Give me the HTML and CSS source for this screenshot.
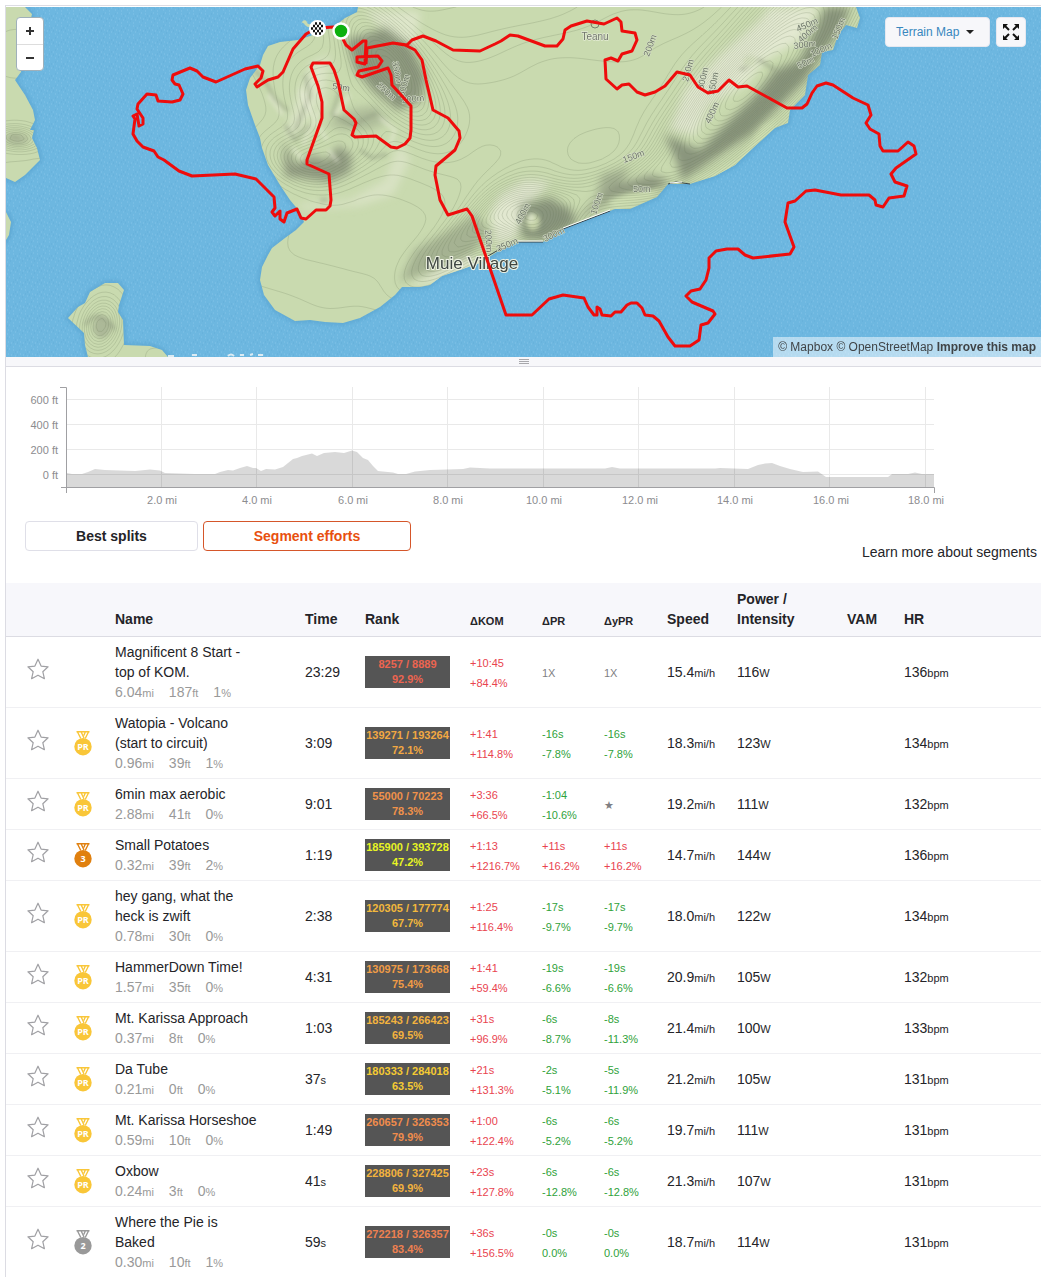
FILE: index.html
```html
<!DOCTYPE html>
<html lang="en">
<head>
<meta charset="utf-8">
<meta name="viewport" content="width=device-width, initial-scale=1">
<title>Segment efforts</title>
<link rel="stylesheet" href="styles.css">
</head>
<body>
<svg class="defs" aria-hidden="true">
  <symbol id="star" viewBox="0 0 22 22"><path d="M11 1.2l3.1 6.9 7 .7-5.3 4.9 1.6 7L11 17.2l-6.4 3.5 1.6-7L.9 8.8l7-.7z" fill="none" stroke="#a0a0a4" stroke-width="1.2" stroke-linejoin="round"/></symbol>
  <symbol id="medal" viewBox="0 0 18 26"><path d="M2.500 1.700h13M3.300 1.500l3.500 7M14.700 1.500l-3.500 7M7 1.500l3 6.500M11.500 1.500l-1.700 4" fill="none" stroke="currentColor" stroke-width="1.400"/><circle cx="9" cy="16.700" r="8.700" fill="currentColor"/></symbol>
</svg>
<main class="page">
  <section class="map" aria-label="Route map">
    <svg class="map-art" viewBox="6 7 1035 350" preserveAspectRatio="xMidYMid slice">
      <defs>
        <pattern id="waves" width="12" height="12" patternUnits="userSpaceOnUse">
          <rect width="12" height="12" fill="#6db7e0"/>
          <path d="M1 2h1M5 4h1M9 1h1M3 8h1M7 10h1M11 7h1M8 6h1M1 11h1" stroke="#83c4e8"/>
          <path d="M3 4h1M7 2h1M5 7h1M10 9h1M1 6h1" stroke="#63add9"/>
        </pattern>
        <path id="land" d="M358 7L357 12 345 18 335 26 325 30 310 36 298 40 280 42 268 46 263 55 260 65 250 78 246 90 248 105 255 125 260 138 262 148 268 165 280 185 290 200 300 212 304 222 296 230 285 238 272 248 268 255 262 267 260 280 264 295 275 310 295 321 310 320 325 322 343 323 360 318 380 307 395 295 402 287 420 287 430 285 442 276 460 270 480 263 500 250 518 242 543 242 565 228 615 209 630 209 657 197 668 184 690 184 715 176 735 165 755 146 775 128 788 123 790 110 805 95 808 75 820 65 822 52 833 50 838 35 846 25 857 28 860 18 856 7z
          M6 7H25L32 14 26 40 21 72 15 80 25 95 33 110 35 120 30 130 34 130 32 138 37 148 40 160 25 175 15 182 6 178z
          M6 212L11 222 9 235 6 240z
          M68 318L78 307 85 303 90 292 105 283 118 283 124 290 119 305 118 312 123 320 124 345 150 346 162 350 168 357H88L85 345 84 333z"/>
        <clipPath id="land-clip"><use href="#land"/></clipPath>
        <filter id="soft4" x="-30%" y="-30%" width="160%" height="160%"><feGaussianBlur stdDeviation="4"/></filter>
        <filter id="soft2" x="-30%" y="-30%" width="160%" height="160%"><feGaussianBlur stdDeviation="2"/></filter>
      </defs>
      <rect x="6" y="7" width="1035" height="350" fill="url(#waves)"/>
      <use href="#land" fill="none" stroke="#5ba6d2" stroke-width="4" filter="url(#soft2)"/>
      <use href="#land" fill="#c9daaf"/>
      <g clip-path="url(#land-clip)">
        <g filter="url(#soft4)" fill="#e2e8d0">
          <path d="M312 62L330 55 325 95 300 130 285 140 297 95z" opacity=".7"/>
          <path d="M365 10L420 12 415 50 390 40z" opacity=".8"/>
          <path d="M400 140L410 160 393 195 360 206 300 210 300 204 350 200 385 180z" opacity=".6"/>
          <path d="M500 195L525 180 550 182 530 205 515 240 495 245 490 215z"/>
          <path d="M670 130L685 90 720 55 760 20 770 7H820L800 40 765 60 745 85 710 105 695 135z"/>
          <path d="M405 288L440 268 470 255 480 262 440 280z"/>
        </g>
        <g filter="url(#soft4)" fill="#87917a">
          <path d="M347 40L385 28 410 45 425 75 422 100 398 110 375 92 355 70z" opacity=".9"/>
          <path d="M284 140L295 165 312 155 328 160 338 145 352 155 350 172 330 182 305 178 285 176z" opacity=".85"/>
          <path d="M325 125L350 110 375 105 390 120 370 130 345 130z" opacity=".4"/>
          <path d="M520 205L550 198 572 210 575 225 545 240 522 238z" opacity=".95"/>
          <path d="M400 282L415 250 450 230 475 215 490 230 470 255 430 272z" opacity=".55"/>
          <path d="M600 200L615 185 650 175 670 180 655 192 620 196z" opacity=".9"/>
          <path d="M595 200L602 175 630 168 610 202 570 225z" opacity=".6"/>
          <path d="M665 135L700 150 725 125 755 95 775 70 800 60 815 30 825 7H850L842 28 825 50 805 80 785 100 750 135 725 150 700 168 682 180 676 160z" opacity=".95"/>
        </g>
        <g filter="url(#soft2)">
          <g fill="none" stroke="#8d967e" stroke-width="3" opacity=".6">
            <path d="M255 70l12 14 8 15 13 12M305 75l5 20-15 35M340 90l-8 25 20 10 25-12M285 125l10 15 15-15M360 150l12 8 15-4M263 185l15 12M320 200h8M10 135l10 4"/>
            <path d="M740 70l20-10 15 10M700 155l20-5 15-15M760 110l20-15M85 325q15-20 30 5"/>
          </g>
          <g fill="none" stroke="#eef0df" stroke-width="3" opacity=".6">
            <path d="M300 90l15 30-12 25M325 100l-10 20 12 20M350 95l-15 20M380 118l15 12-5 15M293 148l10 12M328 150l10 12M268 95l15 20"/>
          </g>
          <ellipse cx="533" cy="222" rx="7" ry="9" fill="#c6d3a9"/>
          <ellipse cx="531" cy="218" rx="3" ry="5" fill="#dde5c9"/>
          <ellipse cx="750" cy="61" rx="7" ry="6" fill="#d6e0c0"/>
          <path d="M608 202l20-8 35-6-12 10-35 10zM688 180l25-8 25-12 25-34 15-8-18 30-35 30z" fill="#cfdfb3"/>
          <ellipse cx="102" cy="327" rx="9" ry="11" fill="#99a388" opacity=".6"/>
          <ellipse cx="17" cy="139" rx="12" ry="6" fill="#99a388" opacity=".5"/>
        </g>
        <path class="contours"/>
      </g>
      <path d="M488 256L500 249M518 242H543M563 229L610 211M668 184L676 182 690 184" fill="none" stroke="#38444a"/>
      <path d="M518 241H543M563 228L610 210M670 183L682 182" fill="none" stroke="#fff"/>
      <path d="M303 23q2-3 3 1 3 3 6 1" fill="none" stroke="#c9daaf" stroke-width="3"/>
      <path d="M168 356h6M192 355h5M228 356q3-3 6 0M240 355h4M250 355l3-1M258 355h5" stroke="#dcebf3" stroke-width="2" fill="none"/>
      <g class="contour-label">
        <text x="332" y="89" transform="rotate(8 332 89)">50m</text>
        <text x="392" y="62" transform="rotate(78 392 62)">350m</text>
        <text x="404" y="97" transform="rotate(-75 404 97)">300m</text>
        <text x="376" y="86" transform="rotate(42 376 86)">250m</text>
        <text x="402" y="103" transform="rotate(-6 402 103)">200m</text>
        <text x="649" y="57" transform="rotate(-70 649 57)">200m</text>
        <text x="688" y="82" transform="rotate(-75 688 82)">250m</text>
        <text x="703" y="90" transform="rotate(-76 703 90)">300m</text>
        <text x="714" y="95" transform="rotate(-78 714 95)">350m</text>
        <text x="710" y="124" transform="rotate(-65 710 124)">400m</text>
        <text x="624" y="163" transform="rotate(-20 624 163)">150m</text>
        <text x="633" y="192">50m</text>
        <text x="596" y="215" transform="rotate(-72 596 215)">100m</text>
        <text x="520" y="225" transform="rotate(-62 520 225)">400m</text>
        <text x="485" y="230" transform="rotate(86 485 230)">200m</text>
        <text x="498" y="252" transform="rotate(-24 498 252)">350m</text>
        <text x="545" y="242" transform="rotate(-26 545 242)">300m</text>
        <text x="798" y="32" transform="rotate(-24 798 32)">450m</text>
        <text x="801" y="43" transform="rotate(-40 801 43)">400m</text>
        <text x="794" y="49" transform="rotate(-8 794 49)">300m</text>
        <text x="812" y="57" transform="rotate(-24 812 57)">100m</text>
        <text x="799" y="69" transform="rotate(-26 799 69)">50m</text>
        <text x="837" y="40" transform="rotate(-68 837 40)">150m</text>
      </g>
      <circle cx="595" cy="24" r="4" fill="none" stroke="#77806d"/>
      <text class="place" x="595" y="40">Teanu</text>
      <text class="place place-large" x="472" y="269">Muie Village</text>
      <path class="route" d="M341 31L334 27 317 28 306 34 293 49 283 72 278 77 268 80 257 87 255 84 261 78 263 71 258 66 245 69 216 82 203 77 197 71 190 68 173 75 172 80 175 84 179 85 183 94 180 100 172 102 158 101 156 95 147 94 138 104 137 109 143 118 143 124 139 126 137 114 133 116 135 119 133 134 137 141 143 147 154 151 158 157 164 160 179 171 192 176 235 174 256 179 274 197 275 208 272 212 275 216 280 211 280 219 284 222 287 213 297 209 301 218 306 219 316 210 326 210 330 206 331 200 329 174 307 164 307 160 322 118 322 102 318 86 311 67 313 63 330 63 334 70 338 82 344 110 354 119 356 123 352 135 355 137 376 136 391 147 397 148 405 144 410 138 411 130 411 106 392 85 391 75 388 68 362 77 357 75 359 71 378 67 382 61 378 56 357 57 357 62 365 64 366 41 363 41 357 46 352 50 346 45 340 33"/>
      <path class="route" d="M366 64L367 48 393 43 405 45 415 50 422 60 426 80 433 110 448 118 459 131 460 138 455 150 436 166 435 175 440 200 448 215 467 209 472 216 506 315 532 315 549 299 563 295 584 298 588 307 594 315 597 315 597 307 600 309 602 315 611 316 615 312 621 312 627 305 631 303 637 303 642 308 645 315 653 316 659 321 668 337 675 346 690 346 699 340 701 325 708 323 715 314 713 311 692 302 686 296 691 291 700 289 706 280 709 268 709 258 716 251 727 249 738 249 745 255 753 258 790 254 794 247 785 222 788 203 795 201 806 191 815 190 841 195 869 195 875 200 876 205 883 207 889 198 904 196 907 186 895 182 891 174 896 168 916 154 914 146 908 142 898 151 883 151 880 146 879 134 870 129 866 123 871 115 868 105 853 98 833 85 826 83 817 86 812 93 807 104 802 108 787 108 747 86 738 87 729 80 718 91 708 93 698 87 690 75 677 72 665 86 655 92 645 95 637 92 629 84 622 85 617 89 606 79 605 60 611 58 618 61 622 54 632 51 637 40 635 33 622 31 621 22 617 18 604 24 587 21 571 26 565 30 563 39 557 46 545 46 518 36 510 35 501 41 495 44 480 51 453 50 436 41 423 36 412 40 407 45 393 43 367 48"/>
      <circle cx="341" cy="31" r="7.500" fill="#0bb00d" stroke="#fff" stroke-width="2.500"/>
      <circle cx="317.500" cy="28.500" r="8.500" fill="#fff"/>
      <path d="M315 24h2M319 24h2M313 26.500h2M317 26.500h2M321 26.500h2M315 29h2M319 29h2M313 31.500h2M317 31.500h2M321 31.500h2M315 34h2M319 34h2M311 29h2" transform="translate(0 -.5)" stroke="#111" stroke-width="2.300"/>
    </svg>
    <div class="zoom-control">
      <button type="button" aria-label="Zoom in"><svg width="8" height="8"><path d="M4 0v8M0 4h8" stroke="#333" stroke-width="2"/></svg></button>
      <button type="button" aria-label="Zoom out"><svg width="8" height="8"><path d="M0 4h8" stroke="#333" stroke-width="2"/></svg></button>
    </div>
    <div class="map-tools">
      <button type="button" class="map-type">Terrain Map <svg width="8" height="4"><path d="M0 0h8L4 4z" fill="#222"/></svg></button>
      <button type="button" class="fullscreen" aria-label="Full screen"><svg width="16" height="16"><path d="M2 2l4 4M14 2l-4 4M2 14l4-4M14 14l-4-4" stroke="#111" stroke-width="2"/><path d="M0 0h5L0 5zM16 0h-5l5 5zM0 16h5l-5-5zM16 16h-5l5-5z" fill="#111"/></svg></button>
    </div>
    <div class="attribution"><a href="#">© Mapbox</a> <a href="#">© OpenStreetMap</a> <a href="#"><b>Improve this map</b></a></div>
  </section>
  <div class="resizer"><svg width="10" height="5"><path d="M0 .5h10M0 2.500h10M0 4.500h10" stroke="#a8a8ac"/></svg></div>

  <svg class="elevation" viewBox="6 367 1035 154" preserveAspectRatio="xMinYMin meet" role="img" aria-label="Elevation profile">
    <path d="M67 399.500H934M67 424.500H934M67 449.500H934M67 474.500H934M161.500 387V487M256.500 387V487M352.500 387V487M447.500 387V487M543.500 387V487M638.500 387V487M734.500 387V487M829.500 387V487M925.500 387V487" stroke="#e9e9e9" fill="none"/>
    <path d="M67 487V473L72 474 82 474 88 472 95 469 105 470 135 471 150 469.500 160 470.500 165 473 195 474 215 474 220 472 228 470 233 470.500 240 468 247 466 253 468 256 468 261 471 266 469 275 469.500 283 467 288 463 293 459 297 458 302 456 312 453.500 317 456 324 453 335 452 344 453 352 450.500 357 452 363 458 368 460 373 466 378 471 393 472.500 398 474 406 474 415 471.500 430 470 463 469 470 467.500 490 468.500 605 468.500 612 467 620 468.500 715 468.500 720 468 748 469 758 465 765 463.500 772 463 780 466 790 469 803 472 818 471.500 826 477 888 477 892 474 908 474 915 472.500 922 474 934 474V487z" fill="#000" opacity=".15"/>
    <path d="M60 387.500H66.500V493M61 487.500H934.500V493" stroke="#a0a0a3" fill="none"/>
    <g class="axis axis-y"><text x="58" y="404">600 ft</text><text x="58" y="429">400 ft</text><text x="58" y="454">200 ft</text><text x="58" y="479">0 ft</text></g>
    <g class="axis"><text x="162" y="504">2.0 mi</text><text x="257" y="504">4.0 mi</text><text x="353" y="504">6.0 mi</text><text x="448" y="504">8.0 mi</text><text x="544" y="504">10.0 mi</text><text x="640" y="504">12.0 mi</text><text x="735" y="504">14.0 mi</text><text x="831" y="504">16.0 mi</text><text x="926" y="504">18.0 mi</text></g>
  </svg>

  <div class="toolbar">
    <div class="tabs"><button type="button">Best splits</button><button type="button" class="active">Segment efforts</button></div>
    <a class="learn" href="#">Learn more about segments</a>
  </div>

  <table class="efforts">
    <colgroup><col class="c-star"><col class="c-medal"><col class="c-name"><col class="c-time"><col class="c-rank"><col class="c-kom"><col class="c-pr"><col class="c-ypr"><col class="c-speed"><col class="c-power"><col class="c-vam"><col></colgroup>
    <thead><tr><th></th><th></th><th>Name</th><th>Time</th><th>Rank</th><th><small>ΔKOM</small></th><th><small>ΔPR</small></th><th><small>ΔyPR</small></th><th>Speed</th><th>Power / Intensity</th><th>VAM</th><th>HR</th></tr></thead>
    <tbody>
      <tr><td><button type="button" class="star" aria-label="Star segment"><svg><use href="#star"/></svg></button></td><td></td><td>Magnificent 8 Start - top of KOM.<div class="stats"><span>6.04<small>mi</small></span><span>187<small>ft</small></span><span>1<small>%</small></span></div></td><td>23:29</td><td><div class="rank r93">8257 / 8889<br>92.9%</div></td><td class="up"><small>+10:45<br>+84.4%</small></td><td class="none"><small>1X</small></td><td class="none"><small>1X</small></td><td>15.4<small>mi/h</small></td><td>116<small>W</small></td><td></td><td>136<small>bpm</small></td></tr>
      <tr><td><button type="button" class="star" aria-label="Star segment"><svg><use href="#star"/></svg></button></td><td><svg class="medal gold"><use href="#medal"/><text x="9" y="20">PR</text></svg></td><td>Watopia - Volcano (start to circuit)<div class="stats"><span>0.96<small>mi</small></span><span>39<small>ft</small></span><span>1<small>%</small></span></div></td><td>3:09</td><td><div class="rank r72">139271 / 193264<br>72.1%</div></td><td class="up"><small>+1:41<br>+114.8%</small></td><td class="down"><small>-16s<br>-7.8%</small></td><td class="down"><small>-16s<br>-7.8%</small></td><td>18.3<small>mi/h</small></td><td>123<small>W</small></td><td></td><td>134<small>bpm</small></td></tr>
      <tr><td><button type="button" class="star" aria-label="Star segment"><svg><use href="#star"/></svg></button></td><td><svg class="medal gold"><use href="#medal"/><text x="9" y="20">PR</text></svg></td><td>6min max aerobic<div class="stats"><span>2.88<small>mi</small></span><span>41<small>ft</small></span><span>0<small>%</small></span></div></td><td>9:01</td><td><div class="rank r78">55000 / 70223<br>78.3%</div></td><td class="up"><small>+3:36<br>+66.5%</small></td><td class="down"><small>-1:04<br>-10.6%</small></td><td class="none"><small>★</small></td><td>19.2<small>mi/h</small></td><td>111<small>W</small></td><td></td><td>132<small>bpm</small></td></tr>
      <tr><td><button type="button" class="star" aria-label="Star segment"><svg><use href="#star"/></svg></button></td><td><svg class="medal bronze"><use href="#medal"/><text x="9" y="20">3</text></svg></td><td>Small Potatoes<div class="stats"><span>0.32<small>mi</small></span><span>39<small>ft</small></span><span>2<small>%</small></span></div></td><td>1:19</td><td><div class="rank r47">185900 / 393728<br>47.2%</div></td><td class="up"><small>+1:13<br>+1216.7%</small></td><td class="up"><small>+11s<br>+16.2%</small></td><td class="up"><small>+11s<br>+16.2%</small></td><td>14.7<small>mi/h</small></td><td>144<small>W</small></td><td></td><td>136<small>bpm</small></td></tr>
      <tr><td><button type="button" class="star" aria-label="Star segment"><svg><use href="#star"/></svg></button></td><td><svg class="medal gold"><use href="#medal"/><text x="9" y="20">PR</text></svg></td><td>hey gang, what the heck is zwift<div class="stats"><span>0.78<small>mi</small></span><span>30<small>ft</small></span><span>0<small>%</small></span></div></td><td>2:38</td><td><div class="rank r68">120305 / 177774<br>67.7%</div></td><td class="up"><small>+1:25<br>+116.4%</small></td><td class="down"><small>-17s<br>-9.7%</small></td><td class="down"><small>-17s<br>-9.7%</small></td><td>18.0<small>mi/h</small></td><td>122<small>W</small></td><td></td><td>134<small>bpm</small></td></tr>
      <tr><td><button type="button" class="star" aria-label="Star segment"><svg><use href="#star"/></svg></button></td><td><svg class="medal gold"><use href="#medal"/><text x="9" y="20">PR</text></svg></td><td>HammerDown Time!<div class="stats"><span>1.57<small>mi</small></span><span>35<small>ft</small></span><span>0<small>%</small></span></div></td><td>4:31</td><td><div class="rank r75">130975 / 173668<br>75.4%</div></td><td class="up"><small>+1:41<br>+59.4%</small></td><td class="down"><small>-19s<br>-6.6%</small></td><td class="down"><small>-19s<br>-6.6%</small></td><td>20.9<small>mi/h</small></td><td>105<small>W</small></td><td></td><td>132<small>bpm</small></td></tr>
      <tr><td><button type="button" class="star" aria-label="Star segment"><svg><use href="#star"/></svg></button></td><td><svg class="medal gold"><use href="#medal"/><text x="9" y="20">PR</text></svg></td><td>Mt. Karissa Approach<div class="stats"><span>0.37<small>mi</small></span><span>8<small>ft</small></span><span>0<small>%</small></span></div></td><td>1:03</td><td><div class="rank r70">185243 / 266423<br>69.5%</div></td><td class="up"><small>+31s<br>+96.9%</small></td><td class="down"><small>-6s<br>-8.7%</small></td><td class="down"><small>-8s<br>-11.3%</small></td><td>21.4<small>mi/h</small></td><td>100<small>W</small></td><td></td><td>133<small>bpm</small></td></tr>
      <tr><td><button type="button" class="star" aria-label="Star segment"><svg><use href="#star"/></svg></button></td><td><svg class="medal gold"><use href="#medal"/><text x="9" y="20">PR</text></svg></td><td>Da Tube<div class="stats"><span>0.21<small>mi</small></span><span>0<small>ft</small></span><span>0<small>%</small></span></div></td><td>37<small>s</small></td><td><div class="rank r64">180333 / 284018<br>63.5%</div></td><td class="up"><small>+21s<br>+131.3%</small></td><td class="down"><small>-2s<br>-5.1%</small></td><td class="down"><small>-5s<br>-11.9%</small></td><td>21.2<small>mi/h</small></td><td>105<small>W</small></td><td></td><td>131<small>bpm</small></td></tr>
      <tr><td><button type="button" class="star" aria-label="Star segment"><svg><use href="#star"/></svg></button></td><td><svg class="medal gold"><use href="#medal"/><text x="9" y="20">PR</text></svg></td><td>Mt. Karissa Horseshoe<div class="stats"><span>0.59<small>mi</small></span><span>10<small>ft</small></span><span>0<small>%</small></span></div></td><td>1:49</td><td><div class="rank r80">260657 / 326353<br>79.9%</div></td><td class="up"><small>+1:00<br>+122.4%</small></td><td class="down"><small>-6s<br>-5.2%</small></td><td class="down"><small>-6s<br>-5.2%</small></td><td>19.7<small>mi/h</small></td><td>111<small>W</small></td><td></td><td>131<small>bpm</small></td></tr>
      <tr><td><button type="button" class="star" aria-label="Star segment"><svg><use href="#star"/></svg></button></td><td><svg class="medal gold"><use href="#medal"/><text x="9" y="20">PR</text></svg></td><td>Oxbow<div class="stats"><span>0.24<small>mi</small></span><span>3<small>ft</small></span><span>0<small>%</small></span></div></td><td>41<small>s</small></td><td><div class="rank r70">228806 / 327425<br>69.9%</div></td><td class="up"><small>+23s<br>+127.8%</small></td><td class="down"><small>-6s<br>-12.8%</small></td><td class="down"><small>-6s<br>-12.8%</small></td><td>21.3<small>mi/h</small></td><td>107<small>W</small></td><td></td><td>131<small>bpm</small></td></tr>
      <tr><td><button type="button" class="star" aria-label="Star segment"><svg><use href="#star"/></svg></button></td><td><svg class="medal silver"><use href="#medal"/><text x="9" y="20">2</text></svg></td><td>Where the Pie is Baked<div class="stats"><span>0.30<small>mi</small></span><span>10<small>ft</small></span><span>1<small>%</small></span></div></td><td>59<small>s</small></td><td><div class="rank r83">272218 / 326357<br>83.4%</div></td><td class="up"><small>+36s<br>+156.5%</small></td><td class="down"><small>-0s<br>0.0%</small></td><td class="down"><small>-0s<br>0.0%</small></td><td>18.7<small>mi/h</small></td><td>114<small>W</small></td><td></td><td>131<small>bpm</small></td></tr>
    </tbody>
  </table>
</main>
<script src="contours.js"></script>
</body>
</html>
```

FILE: styles.css
```css
* { box-sizing: border-box; }
body { margin: 0; background: #fff; color: #242428; font: 14px/20px "Liberation Sans", Arial, sans-serif; }
button { margin: 0; padding: 0; border: 0; background: none; font: inherit; color: inherit; cursor: pointer; }
a { color: inherit; text-decoration: none; }
small { font-size: 11px; line-height: 1; }
.defs { display: none; }

.page { margin: 5px 0 0 5px; padding-top: 1px; border: solid #dcdce3; border-width: 1px 0 0 1px; }

/* Map */
.map { position: relative; overflow: hidden; }
.map-art { display: block; width: 100%; height: 350px; }
.route { fill: none; stroke: #ee0c0c; stroke-width: 3; stroke-linejoin: round; }
.contours { fill: none; stroke: #647356; stroke-width: 1; opacity: .2; }
.contour-label { font-size: 9px; fill: #6c7566; stroke: #dbe3cd; stroke-width: 1px; paint-order: stroke; }
.place { font-size: 10px; fill: #6f7569; stroke: #eef2e3; stroke-width: 1px; paint-order: stroke; text-anchor: middle; }
.place-large { font-size: 17px; fill: #3e4642; stroke-width: 2px; }

.zoom-control { position: absolute; top: 10px; left: 10px; width: 28px; border: 1px solid #9fb0ba; border-radius: 4px; background: #fff; overflow: hidden; }
.zoom-control button { display: flex; width: 100%; height: 26px; align-items: center; justify-content: center; }
.zoom-control button + button { border-top: 1px solid #ddd; }

.map-tools { position: absolute; top: 10px; right: 15px; display: flex; gap: 6px; }
.map-tools button { display: flex; height: 30px; align-items: center; justify-content: center; border: 1px solid #e6e8f0; border-radius: 4px; background: #f7f7fa; }
.map-tools .map-type { gap: 7px; justify-content: flex-start; padding: 0 10px; width: 105px; color: #3887be; font-size: 12px; white-space: nowrap; }
.fullscreen { width: 30px; }

.attribution { position: absolute; right: 0; bottom: 0; padding: 0 5px; background: rgba(255, 255, 255, .5); color: #404447; font-size: 12px; }

.resizer { display: flex; height: 10px; align-items: center; justify-content: center; background: #f7f7fa; border-bottom: 1px solid #dcdce3; }

/* Elevation profile */
.elevation { display: block; width: 100%; }
.axis { font-size: 11px; fill: #8c8c8f; text-anchor: middle; }
.axis-y { text-anchor: end; }

/* Tabs */
.toolbar { display: flex; align-items: flex-end; justify-content: space-between; height: 41px; margin: 0 4px 21px 19px; }
.tabs { display: flex; gap: 5px; align-self: flex-start; }
.tabs button { width: 173px; height: 30px; border: 1px solid #dfdfe8; border-radius: 4px; font-weight: bold; }
.tabs .active { width: 208px; border-color: #d5562a; color: #e8500f; }

/* Efforts table */
.efforts { width: 100%; table-layout: fixed; border-collapse: separate; border-spacing: 0; }
.efforts .c-star { width: 55px; }
.efforts .c-medal { width: 44px; }
.efforts .c-name { width: 190px; }
.efforts .c-time { width: 60px; }
.efforts .c-rank { width: 105px; }
.efforts .c-kom { width: 72px; }
.efforts .c-pr { width: 62px; }
.efforts .c-ypr { width: 63px; }
.efforts .c-speed { width: 70px; }
.efforts .c-power { width: 110px; }
.efforts .c-vam { width: 57px; }
.efforts th { padding: 6px 10px 7px; background: #f7f7fb; border-bottom: 1px solid #dcdce3; text-align: left; vertical-align: bottom; }
.efforts th small { vertical-align: -1px; }
.efforts th:nth-child(10) { padding-right: 40px; }
.efforts td { padding: 5px 0 5px 10px; border-bottom: 1px solid #f0f0f3; vertical-align: middle; }
.efforts tr:last-child td { border-bottom: 0; }
.efforts td:nth-child(1) { padding-left: 21px; }
.efforts td:nth-child(2) { padding-left: 13px; }
.efforts td:nth-child(3) { padding-right: 35px; }

.star { display: block; margin-bottom: 6px; }
.star svg { display: block; width: 22px; height: 22px; }
.medal { display: block; width: 18px; height: 26px; }
.medal text { font: bold 9px "Open Sans", sans-serif; fill: #fff; text-anchor: middle; }
.gold { color: #f9c638; }
.bronze { color: #e0800f; }
.silver { color: #999; }

.stats { display: flex; gap: 15px; color: #999; }
.up { color: #e9444f; }
.down { color: #2fa23a; }
.none { color: #7f7f83; }

.rank { width: 85px; padding: 1px 0; background: #555; font-size: 11px; font-weight: bold; line-height: 15px; text-align: center; white-space: nowrap; }
.r93 { color: #ec6450; }
.r83 { color: #ee8050; }
.r80 { color: #f08c4c; }
.r78 { color: #f0924a; }
.r75 { color: #f09c46; }
.r72 { color: #f2a842; }
.r70 { color: #f2b23e; }
.r68 { color: #f2b83c; }
.r64 { color: #f4ca33; }
.r47 { color: #e8f424; }
```

FILE: contours.js
```js
// Height lines for the terrain map, traced over a field of hills.
(function () {
  // x, y, spread along, spread across, angle in degrees, height in metres
  var hills = [
    [300, 160, 25, 16, 20, 180], [340, 150, 28, 18, -20, 180], [325, 100, 30, 22, 60, 140],
    [388, 65, 50, 20, 55, 360], [533, 220, 30, 24, 0, 440], [465, 238, 45, 14, -40, 200],
    [620, 185, 50, 14, -15, 170], [720, 115, 70, 24, -45, 380], [800, 30, 90, 34, -50, 420],
    [420, 100, 130, 80, 20, 90], [640, 60, 130, 80, -30, 110], [17, 138, 16, 8, 5, 180],
    [101, 325, 13, 18, 15, 220], [330, 250, 70, 40, 0, 40]
  ];
  function height(x, y) {
    var sum = 5 * Math.sin(x / 23) * Math.cos(y / 17);
    hills.forEach(function (h) {
      var a = h[4] * Math.PI / 180, dx = x - h[0], dy = y - h[1];
      var u = (dx * Math.cos(a) + dy * Math.sin(a)) / h[2];
      var v = (dy * Math.cos(a) - dx * Math.sin(a)) / h[3];
      sum += h[5] * Math.exp(-(u * u + v * v) / 2);
    });
    return sum;
  }
  var step = 4, d = [];
  for (var y = 7; y < 357; y += step) {
    for (var x = 6; x < 866; x += step) {
      var c = [[x, y], [x + step, y], [x + step, y + step], [x, y + step]];
      var z = c.map(function (p) { return height(p[0], p[1]); });
      var low = Math.ceil(Math.min.apply(0, z) / 20) * 20, high = Math.max.apply(0, z);
      for (var level = low; level < high; level += 20) {
        var cuts = [];
        for (var i = 0; i < 4; i++) {
          var j = (i + 1) % 4;
          if ((z[i] < level) !== (z[j] < level)) {
            var t = (level - z[i]) / (z[j] - z[i]);
            cuts.push((c[i][0] + t * (c[j][0] - c[i][0])).toFixed(1) + ' ' + (c[i][1] + t * (c[j][1] - c[i][1])).toFixed(1));
          }
        }
        for (var k = 0; k + 1 < cuts.length; k += 2) d.push('M' + cuts[k] + 'L' + cuts[k + 1]);
      }
    }
  }
  document.querySelector('.contours').setAttribute('d', d.join(''));
})();
```
